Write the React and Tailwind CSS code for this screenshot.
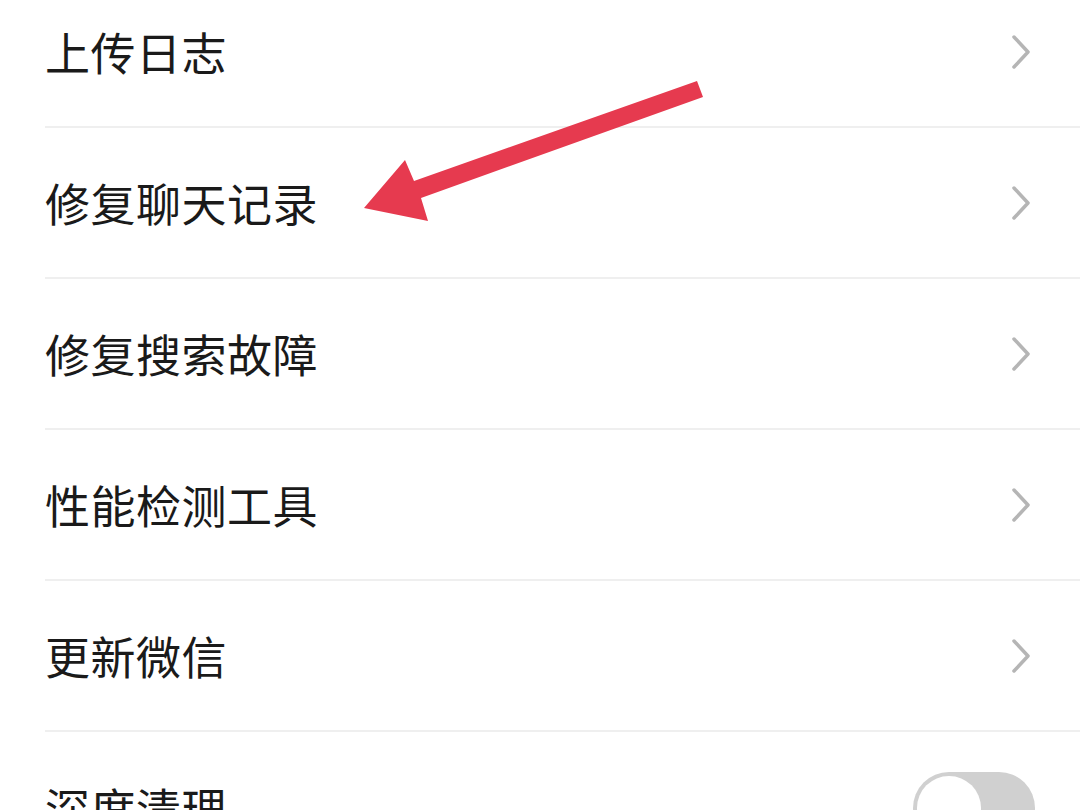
const items = [
  { label: "上传日志", type: "link" },
  { label: "修复聊天记录", type: "link" },
  { label: "修复搜索故障", type: "link" },
  { label: "性能检测工具", type: "link" },
  { label: "更新微信", type: "link" },
  { label: "深度清理", type: "switch" },
];

function Chevron() {
  return (
    <svg width="22" height="36" viewBox="0 0 22 36" fill="none">
      <path
        d="M4 3 L18 18 L4 33"
        stroke="#b5b5b5"
        strokeWidth="3.5"
        strokeLinecap="round"
        strokeLinejoin="round"
      />
    </svg>
  );
}

function Toggle() {
  return (
    <div className="w-[122px] h-[72px] rounded-full bg-[#d0d0d0] p-[4px] flex items-center">
      <div className="w-[64px] h-[64px] rounded-full bg-white" />
    </div>
  );
}

function Row({ item, last }) {
  return (
    <div className="h-[151px] pl-[45px]">
      <div
        className={
          last
            ? "h-full flex items-center"
            : "h-full flex items-center border-b-2 border-[#efefef]"
        }
      >
        <span className="flex-1 text-[45px] text-[#1a1a1a] leading-none tracking-[0.5px]">
          {item.label}
        </span>
        {item.type === "link" ? (
          <div className="pr-[48px] flex items-center">
            <Chevron />
          </div>
        ) : (
          <div className="pr-[45px] flex items-center">
            <Toggle />
          </div>
        )}
      </div>
    </div>
  );
}

function App() {
  return (
    <div
      className="relative w-[1080px] h-[810px] bg-white overflow-hidden"
      style={{ fontFamily: '"Noto Sans CJK SC", "Noto Sans", sans-serif' }}
    >
      <div className="mt-[-23px]">
        {items.map((item, i) => (
          <Row key={item.label} item={item} last={i === items.length - 1} />
        ))}
      </div>

      <svg
        className="absolute left-0 top-0"
        width="1080"
        height="810"
        viewBox="0 0 1080 810"
      >
        <polygon
          points="697,81 703,97 421,198 428,221 364,208 405,160 414,181"
          fill="#e63a4f"
        />
      </svg>
    </div>
  );
}

export default App;
